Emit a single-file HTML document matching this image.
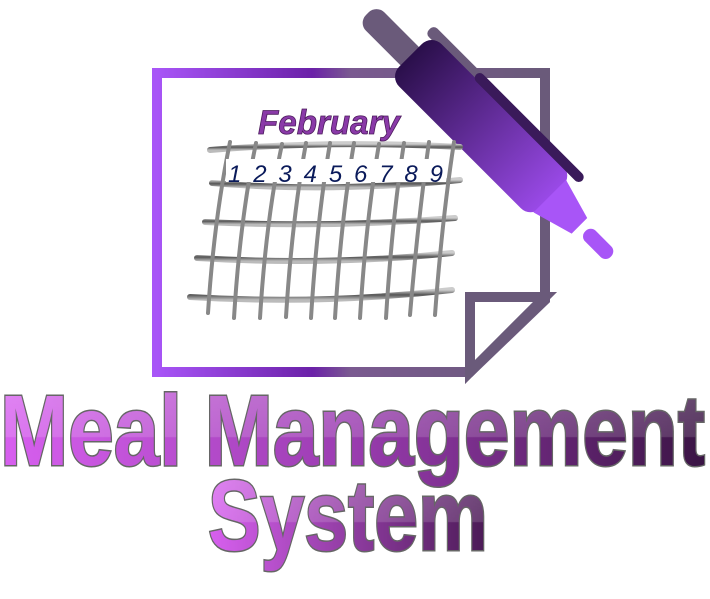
<!DOCTYPE html>
<html><head><style>
html,body{margin:0;padding:0;background:#fff;width:710px;height:599px;overflow:hidden}
svg{display:block}
</style></head><body>
<svg width="710" height="599" viewBox="0 0 710 599" xmlns="http://www.w3.org/2000/svg">
<defs>
<linearGradient id="fr" x1="0" x2="1" y1="0" y2="0">
<stop offset="0" stop-color="#a855f7"/><stop offset="0.4" stop-color="#6b21a8"/><stop offset="0.5" stop-color="#7a5a90"/><stop offset="1" stop-color="#6a5a7a"/></linearGradient>
<linearGradient id="tx" x1="0" x2="1" y1="0" y2="0">
<stop offset="0" stop-color="#d860f0"/><stop offset="0.5" stop-color="#9a3cb0"/><stop offset="1" stop-color="#3a1444"/></linearGradient>
<linearGradient id="tx2" x1="0" x2="1" y1="0" y2="0">
<stop offset="0" stop-color="#d860f0"/><stop offset="1" stop-color="#4a1a55"/></linearGradient>
<linearGradient id="gl" x1="0" x2="0" y1="0" y2="1">
<stop offset="0" stop-color="#fff" stop-opacity="0.25"/><stop offset="0.55" stop-color="#fff" stop-opacity="0.15"/><stop offset="0.56" stop-color="#fff" stop-opacity="0"/></linearGradient>
<linearGradient id="pen" x1="0" x2="1" y1="0" y2="0">
<stop offset="0" stop-color="#2a0f4a"/><stop offset="1" stop-color="#9a4ae8"/></linearGradient>
<linearGradient id="gr" x1="0" x2="0" y1="0" y2="1">
<stop offset="0" stop-color="#ccc"/><stop offset="0.5" stop-color="#555"/><stop offset="1" stop-color="#bbb"/></linearGradient>
</defs>
<!-- frame -->
<path d="M157 73 H545 V300 L470 372 H157 Z" fill="#fff" stroke="url(#fr)" stroke-width="10"/>
<path d="M470 297 H545 L470 372 Z" fill="#fff" stroke="#6a5a7a" stroke-width="10" stroke-linejoin="miter"/>
<!-- pen -->
<g transform="translate(368,13) rotate(45)">
<rect x="0" y="-12" width="70" height="26" rx="11" fill="#6a5a7a"/>
<rect x="55" y="-38" width="90" height="12" rx="5" fill="#6a5a7a"/>
<rect x="60" y="-30" width="200" height="60" rx="14" fill="url(#pen)"/>
<rect x="120" y="-38" width="150" height="10" rx="5" fill="#3a1a5a"/>
<path d="M258 -22 L300 -10 L300 12 L258 24 Z" fill="#a855f7"/>
<rect x="308" y="-7" width="36" height="15" rx="7" fill="#a855f7"/>
</g>
<!-- calendar grid -->
<g fill="none" stroke="url(#gr)" stroke-width="6" stroke-linecap="round">
<path d="M210 150 Q330 140 460 147"/>
<path d="M212 183 Q330 193 460 180"/>
<path d="M205 222 Q330 228 455 218"/>
<path d="M197 258 Q330 266 452 253"/>
<path d="M190 297 Q320 305 452 290"/>
</g>
<g fill="none" stroke="#888" stroke-width="4" stroke-linecap="round">
<path d="M230 142 Q214 220 208 313"/>
<path d="M256 143 Q240 220 234 318"/>
<path d="M282 144 Q266 220 260 318"/>
<path d="M306 143 Q292 220 286 317"/>
<path d="M330 143 Q317 220 311 318"/>
<path d="M354 143 Q341 220 335 318"/>
<path d="M379 144 Q366 220 360 318"/>
<path d="M404 143 Q392 220 386 318"/>
<path d="M429 142 Q418 220 410 315"/>
<path d="M454 142 Q442 220 435 315"/>
</g>
<g fill="#fff"><rect x="226" y="159" width="220" height="23"/></g>
<text x="228" y="182" font-family="Liberation Sans, sans-serif" font-size="24" font-style="italic" fill="#0a1a5a" textLength="215" lengthAdjust="spacing">123456789</text>
<text x="258" y="134" font-family="Liberation Sans, sans-serif" font-size="34" font-weight="bold" font-style="italic" fill="#8a3aa8" stroke="#4a1a5a" stroke-width="0.8" textLength="142" lengthAdjust="spacingAndGlyphs">February</text>
<!-- title -->
<g font-family="Liberation Sans, sans-serif" font-weight="bold" stroke="#666" stroke-width="3" paint-order="stroke">
<text x="0" y="465" font-size="100" fill="url(#tx)" textLength="705" lengthAdjust="spacingAndGlyphs">Meal Management</text>
<text x="0" y="465" font-size="100" fill="url(#gl)" stroke="none" textLength="705" lengthAdjust="spacingAndGlyphs">Meal Management</text>
<text x="208" y="550" font-size="100" fill="url(#tx2)" textLength="280" lengthAdjust="spacingAndGlyphs">System</text>
<text x="208" y="550" font-size="100" fill="url(#gl)" stroke="none" textLength="280" lengthAdjust="spacingAndGlyphs">System</text>
</g>
</svg>
</body></html>
